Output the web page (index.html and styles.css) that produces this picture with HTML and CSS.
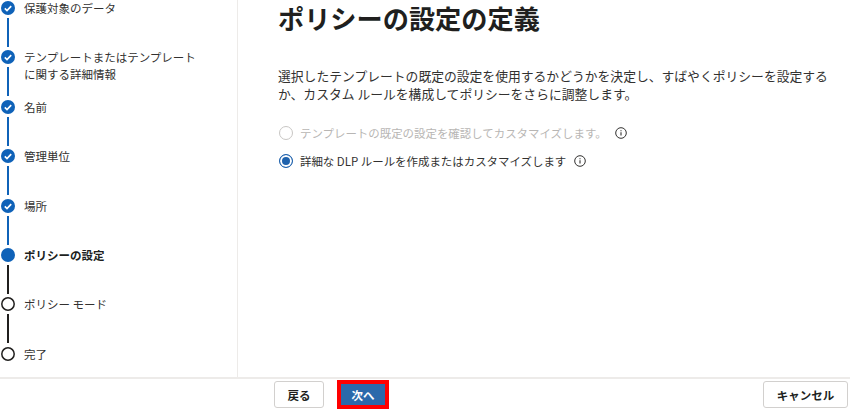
FILE: index.html
```html
<!DOCTYPE html>
<html lang="ja">
<head>
  <meta charset="utf-8">
  <title>ポリシーの設定の定義</title>
  <link rel="stylesheet" href="styles.css">
</head>
<body>
  <div class="wizard">
    <nav class="steps">
      <div class="step done">
        <div class="marker">
          <svg class="dot" viewBox="0 0 14 14"><circle cx="7" cy="7" r="7" fill="#0f62b8"/><path d="M3.8 7.3l2.2 2.2 4.2-4.4" fill="none" stroke="#fff" stroke-width="1.7"/></svg>
          <span class="line"></span>
        </div>
        <div class="label">保護対象のデータ</div>
      </div>
      <div class="step done">
        <div class="marker">
          <svg class="dot" viewBox="0 0 14 14"><circle cx="7" cy="7" r="7" fill="#0f62b8"/><path d="M3.8 7.3l2.2 2.2 4.2-4.4" fill="none" stroke="#fff" stroke-width="1.7"/></svg>
          <span class="line"></span>
        </div>
        <div class="label">テンプレートまたはテンプレート<br>に関する詳細情報</div>
      </div>
      <div class="step done">
        <div class="marker">
          <svg class="dot" viewBox="0 0 14 14"><circle cx="7" cy="7" r="7" fill="#0f62b8"/><path d="M3.8 7.3l2.2 2.2 4.2-4.4" fill="none" stroke="#fff" stroke-width="1.7"/></svg>
          <span class="line"></span>
        </div>
        <div class="label">名前</div>
      </div>
      <div class="step done">
        <div class="marker">
          <svg class="dot" viewBox="0 0 14 14"><circle cx="7" cy="7" r="7" fill="#0f62b8"/><path d="M3.8 7.3l2.2 2.2 4.2-4.4" fill="none" stroke="#fff" stroke-width="1.7"/></svg>
          <span class="line"></span>
        </div>
        <div class="label">管理単位</div>
      </div>
      <div class="step done">
        <div class="marker">
          <svg class="dot" viewBox="0 0 14 14"><circle cx="7" cy="7" r="7" fill="#0f62b8"/><path d="M3.8 7.3l2.2 2.2 4.2-4.4" fill="none" stroke="#fff" stroke-width="1.7"/></svg>
          <span class="line"></span>
        </div>
        <div class="label">場所</div>
      </div>
      <div class="step current">
        <div class="marker">
          <svg class="dot" viewBox="0 0 14 14"><circle cx="7" cy="7" r="7" fill="#0f62b8"/></svg>
          <span class="line"></span>
        </div>
        <div class="label">ポリシーの設定</div>
      </div>
      <div class="step">
        <div class="marker">
          <svg class="dot" viewBox="0 0 14 14"><circle cx="7" cy="7" r="6.2" fill="#fff" stroke="#201f1e" stroke-width="1.5"/></svg>
          <span class="line"></span>
        </div>
        <div class="label">ポリシー モード</div>
      </div>
      <div class="step">
        <div class="marker">
          <svg class="dot" viewBox="0 0 14 14"><circle cx="7" cy="7" r="6.2" fill="#fff" stroke="#201f1e" stroke-width="1.5"/></svg>
        </div>
        <div class="label">完了</div>
      </div>
    </nav>

    <main class="content">
      <h1>ポリシーの設定の定義</h1>
      <p class="intro">選択したテンプレートの既定の設定を使用するかどうかを決定し、すばやくポリシーを設定するか、カスタム ルールを構成してポリシーをさらに調整します。</p>
      <div class="options">
        <div class="option disabled">
          <span class="radio"></span>
          <span>テンプレートの既定の設定を確認してカスタマイズします。</span>
          <svg class="info" viewBox="0 0 12 12"><circle cx="6" cy="6" r="5.3" fill="none" stroke="#323130"/><path d="M6 5.2v3.4M6 3.2v1.1" stroke="#323130" stroke-width="1.1"/></svg>
        </div>
        <div class="option">
          <span class="radio checked"></span>
          <span>詳細な DLP ルールを作成またはカスタマイズします</span>
          <svg class="info" viewBox="0 0 12 12"><circle cx="6" cy="6" r="5.3" fill="none" stroke="#323130"/><path d="M6 5.2v3.4M6 3.2v1.1" stroke="#323130" stroke-width="1.1"/></svg>
        </div>
      </div>
    </main>
  </div>

  <footer class="footer">
    <button class="btn" type="button">戻る</button>
    <button class="btn primary" type="button">次へ</button>
    <button class="btn cancel" type="button">キャンセル</button>
  </footer>
</body>
</html>
```

FILE: styles.css
```css
html, body {
  margin: 0;
  height: 410px;
  overflow: hidden;
  background-color: #fff;
}

body {
  font-family: "Noto Sans CJK JP", "Noto Sans", sans-serif;
  color: #323130;
}

.wizard {
  display: flex;
  height: 377px;
  overflow: hidden;
}

/* left step list */
.steps {
  box-sizing: border-box;
  width: 238px;
  padding: 1px 0 0 1px;
  border-right: 1px solid #edebe9;
}

.step {
  display: flex;
  height: 49.4px;
}

.marker {
  display: flex;
  flex-direction: column;
  align-items: center;
  width: 14px;
  margin-right: 9px;
}

.dot {
  display: block;
  flex: none;
  width: 14px;
  height: 14px;
}

.line {
  flex: none;
  width: 1.5px;
  height: 29px;
  margin-top: 3px;
  background-color: #201f1e;
}

.done .line {
  background-color: #0f62b8;
}

.label {
  font-size: 11.5px;
  line-height: 17px;
  transform: translateY(-1px);
}

.current .label {
  font-weight: 700;
  color: #201f1e;
}

/* main panel */
.content {
  flex: 1;
  padding-left: 40px;
}

h1 {
  margin: 0;
  font-size: 26.2px;
  line-height: 36px;
  font-weight: 700;
  color: #201f1e;
}

.intro {
  width: 556px;
  margin: 31px 0 0;
  font-size: 12.8px;
  line-height: 18px;
}

.options {
  margin-top: 16px;
}

.option {
  display: flex;
  align-items: center;
  gap: 7px;
  height: 28px;
  font-size: 11.45px;
}

.option .info {
  margin-left: 1px;
}

.option.disabled {
  color: #b8b6b4;
}

.radio {
  box-sizing: border-box;
  flex: none;
  width: 14px;
  height: 14px;
  margin-left: 1px;
  border: 1px solid #c8c6c4;
  border-radius: 50%;
}

.radio.checked {
  border-color: #1f62ad;
  background-color: #1f62ad;
  box-shadow: inset 0 0 0 2px #fff;
}

.info {
  flex: none;
  width: 12px;
  height: 12px;
}

/* bottom bar */
.footer {
  box-sizing: border-box;
  display: flex;
  align-items: center;
  gap: 13px;
  height: 33px;
  padding: 0 2px 0 274px;
  border-top: 2px solid #edebe9;
}

.btn {
  box-sizing: border-box;
  height: 27px;
  width: 50px;
  padding: 0;
  border: 1px solid #d2d0ce;
  border-radius: 3px;
  background-color: #fff;
  color: #201f1e;
  font-family: inherit;
  font-size: 11.5px;
  font-weight: 700;
}

.primary {
  width: 52px;
  height: 29px;
  border: 4px solid #f00;
  border-radius: 0;
  background-color: #2b69ab;
  color: #fff;
}

.cancel {
  width: 85px;
  margin-left: auto;
}
```
